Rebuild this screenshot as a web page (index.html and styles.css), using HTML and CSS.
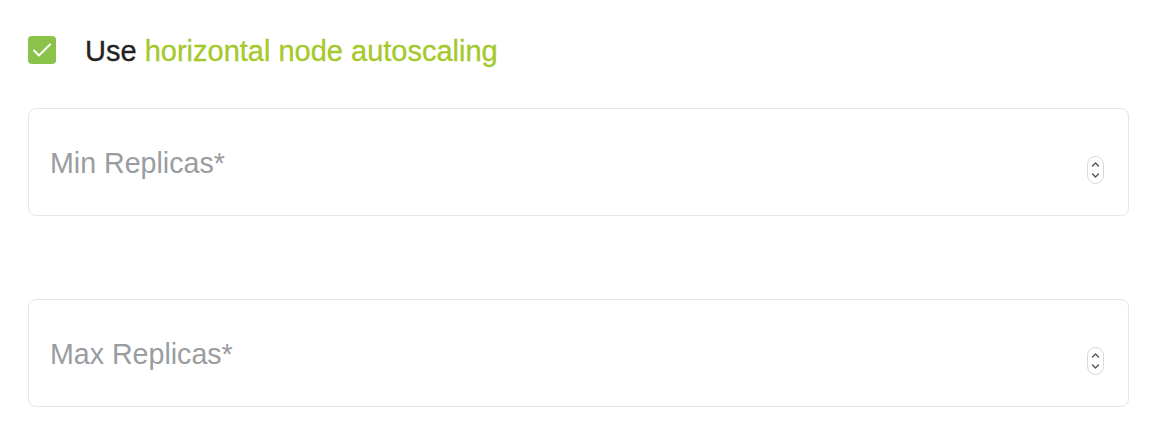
FILE: index.html
```html
<!DOCTYPE html>
<html lang="en">
  <head>
    <meta charset="UTF-8" />
    <meta name="viewport" content="width=device-width, initial-scale=1.0" />
    <title>Autoscaling</title>
    <link rel="stylesheet" href="styles.css">
  </head>

  <body>
    <label class="check-row">
      <span class="check-box">
        <svg width="20" height="16" viewBox="0 0 20 16">
          <path d="M2 8.5 L7 13.5 L18 2.5" fill="none" stroke="#fff" stroke-width="2" stroke-linecap="round" stroke-linejoin="round" />
        </svg>
      </span>
      <span class="check-text">Use <span class="accent">horizontal node autoscaling</span></span>
    </label>

    <div class="field">
      <span class="placeholder">Min Replicas*</span>
      <span class="spinner">
        <svg width="17" height="28" viewBox="0 0 17 28">
          <rect x="0.5" y="0.5" width="16" height="27" rx="8" fill="#fff" stroke="#d8d8d8" />
          <path d="M5.5 10 L8.5 7 L11.5 10" fill="none" stroke="#555" stroke-width="1.4" stroke-linecap="round" stroke-linejoin="round" />
          <path d="M5.5 18 L8.5 21 L11.5 18" fill="none" stroke="#555" stroke-width="1.4" stroke-linecap="round" stroke-linejoin="round" />
        </svg>
      </span>
    </div>

    <div class="field second">
      <span class="placeholder">Max Replicas*</span>
      <span class="spinner">
        <svg width="17" height="28" viewBox="0 0 17 28">
          <rect x="0.5" y="0.5" width="16" height="27" rx="8" fill="#fff" stroke="#d8d8d8" />
          <path d="M5.5 10 L8.5 7 L11.5 10" fill="none" stroke="#555" stroke-width="1.4" stroke-linecap="round" stroke-linejoin="round" />
          <path d="M5.5 18 L8.5 21 L11.5 18" fill="none" stroke="#555" stroke-width="1.4" stroke-linecap="round" stroke-linejoin="round" />
        </svg>
      </span>
    </div>
  </body>
</html>
```

FILE: styles.css
```css
body {
  margin: 0;
  padding: 36px 21px 0 28px;
  background: #fff;
  font-family: "Liberation Sans", Arial, sans-serif;
}

.check-row {
  display: flex;
  align-items: center;
  gap: 29px;
  height: 28px;
}

.check-box {
  width: 28px;
  height: 28px;
  border-radius: 4px;
  background-color: #8bc34a;
  display: flex;
  align-items: center;
  justify-content: center;
}

.check-text {
  font-size: 29px;
  color: #222;
  margin-top: 3px;
  -webkit-text-stroke: 0.3px currentColor;
}

.accent {
  color: #a5c82a;
}

.field {
  margin-top: 44px;
  height: 106px;
  border: 1px solid #e6e6e6;
  border-radius: 8px;
  display: flex;
  align-items: center;
  justify-content: space-between;
  padding: 0 24px 0 21px;
}

.field.second {
  margin-top: 83px;
}

.placeholder {
  font-size: 28.6px;
  color: #999da1;
  margin-top: 2px;
}

.spinner {
  display: flex;
  margin-top: 16px;
}
```
